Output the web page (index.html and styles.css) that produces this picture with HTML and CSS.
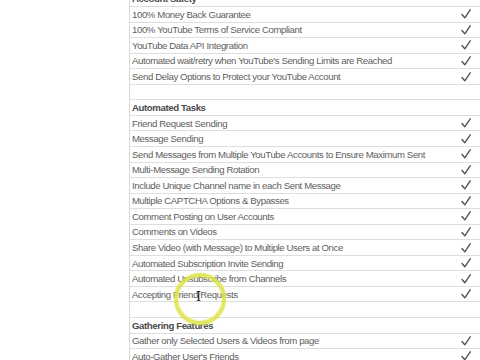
FILE: index.html
```html
<!DOCTYPE html>
<html>
<head>
<meta charset="utf-8">
<link rel="stylesheet" href="styles.css">
</head>
<body>
<div class="page">
  <div class="table">
    <div class="row head"><span class="label">Account Safety</span></div>
    <div class="row"><span class="label">100% Money Back Guarantee</span><span class="check"><svg viewBox="0 0 10 10"><path d="M1 5.5 L3.8 8.8 L9.2 0.8"/></svg></span></div>
    <div class="row"><span class="label">100% YouTube Terms of Service Compliant</span><span class="check"><svg viewBox="0 0 10 10"><path d="M1 5.5 L3.8 8.8 L9.2 0.8"/></svg></span></div>
    <div class="row"><span class="label">YouTube Data API Integration</span><span class="check"><svg viewBox="0 0 10 10"><path d="M1 5.5 L3.8 8.8 L9.2 0.8"/></svg></span></div>
    <div class="row"><span class="label">Automated wait/retry when YouTube's Sending Limits are Reached</span><span class="check"><svg viewBox="0 0 10 10"><path d="M1 5.5 L3.8 8.8 L9.2 0.8"/></svg></span></div>
    <div class="row"><span class="label">Send Delay Options to Protect your YouTube Account</span><span class="check"><svg viewBox="0 0 10 10"><path d="M1 5.5 L3.8 8.8 L9.2 0.8"/></svg></span></div>
    <div class="row"><span class="label"></span></div>
    <div class="row head"><span class="label">Automated Tasks</span></div>
    <div class="row"><span class="label">Friend Request Sending</span><span class="check"><svg viewBox="0 0 10 10"><path d="M1 5.5 L3.8 8.8 L9.2 0.8"/></svg></span></div>
    <div class="row"><span class="label">Message Sending</span><span class="check"><svg viewBox="0 0 10 10"><path d="M1 5.5 L3.8 8.8 L9.2 0.8"/></svg></span></div>
    <div class="row"><span class="label">Send Messages from Multiple YouTube Accounts to Ensure Maximum Sent</span><span class="check"><svg viewBox="0 0 10 10"><path d="M1 5.5 L3.8 8.8 L9.2 0.8"/></svg></span></div>
    <div class="row"><span class="label">Multi-Message Sending Rotation</span><span class="check"><svg viewBox="0 0 10 10"><path d="M1 5.5 L3.8 8.8 L9.2 0.8"/></svg></span></div>
    <div class="row"><span class="label">Include Unique Channel name in each Sent Message</span><span class="check"><svg viewBox="0 0 10 10"><path d="M1 5.5 L3.8 8.8 L9.2 0.8"/></svg></span></div>
    <div class="row"><span class="label">Multiple CAPTCHA Options &amp; Bypasses</span><span class="check"><svg viewBox="0 0 10 10"><path d="M1 5.5 L3.8 8.8 L9.2 0.8"/></svg></span></div>
    <div class="row"><span class="label">Comment Posting on User Accounts</span><span class="check"><svg viewBox="0 0 10 10"><path d="M1 5.5 L3.8 8.8 L9.2 0.8"/></svg></span></div>
    <div class="row"><span class="label">Comments on Videos</span><span class="check"><svg viewBox="0 0 10 10"><path d="M1 5.5 L3.8 8.8 L9.2 0.8"/></svg></span></div>
    <div class="row"><span class="label">Share Video (with Message) to Multiple Users at Once</span><span class="check"><svg viewBox="0 0 10 10"><path d="M1 5.5 L3.8 8.8 L9.2 0.8"/></svg></span></div>
    <div class="row"><span class="label">Automated Subscription Invite Sending</span><span class="check"><svg viewBox="0 0 10 10"><path d="M1 5.5 L3.8 8.8 L9.2 0.8"/></svg></span></div>
    <div class="row"><span class="label">Automated Unsubscribe from Channels</span><span class="check"><svg viewBox="0 0 10 10"><path d="M1 5.5 L3.8 8.8 L9.2 0.8"/></svg></span></div>
    <div class="row"><span class="label">Accepting Friend Requests</span><span class="check"><svg viewBox="0 0 10 10"><path d="M1 5.5 L3.8 8.8 L9.2 0.8"/></svg></span></div>
    <div class="row"><span class="label"></span></div>
    <div class="row head"><span class="label">Gathering Features</span></div>
    <div class="row"><span class="label">Gather only Selected Users &amp; Videos from page</span><span class="check"><svg viewBox="0 0 10 10"><path d="M1 5.5 L3.8 8.8 L9.2 0.8"/></svg></span></div>
    <div class="row"><span class="label">Auto-Gather User's Friends</span><span class="check"><svg viewBox="0 0 10 10"><path d="M1 5.5 L3.8 8.8 L9.2 0.8"/></svg></span></div>
  </div>
  <div class="cursor-ring"></div>
  <div class="ibeam">I</div>
</div>
</body>
</html>
```
FILE: styles.css
```css
html, body {
  margin: 0;
  padding: 0;
  background: #ffffff;
  overflow: hidden;
}
.page {
  position: relative;
  width: 480px;
  height: 360px;
  overflow: hidden;
  padding-left: 129px;
  box-sizing: border-box;
}
.table {
  margin-top: -8.5px;
  border-left: 1px solid #d8d8d8;
  font-family: "Liberation Sans", Arial, sans-serif;
  font-size: 9.6px;
  letter-spacing: -0.38px;
  color: #5e5e5e;
}
.row {
  display: flex;
  align-items: center;
  height: 15.55px;
  box-sizing: border-box;
  border-bottom: 1px solid #dedede;
  padding-left: 2px;
}
.row.head .label {
  font-weight: bold;
  color: #4a4a4a;
}
.label {
  flex: 1;
  white-space: nowrap;
}
.check {
  width: 19px;
  display: flex;
  align-items: center;
}
.check svg {
  width: 10px;
  height: 10px;
}
.check path {
  fill: none;
  stroke: #4f5a4a;
  stroke-width: 1.4;
  stroke-linecap: round;
  stroke-linejoin: round;
}
.cursor-ring {
  position: absolute;
  left: 174px;
  top: 273px;
  width: 44px;
  height: 44px;
  border: 4px solid rgba(222, 228, 70, 0.85);
  border-radius: 50%;
  box-shadow: 0 0 2px rgba(222, 228, 70, 0.6), inset 0 0 2px rgba(222, 228, 70, 0.6);
}
.ibeam {
  position: absolute;
  left: 196px;
  top: 289px;
  font-family: "DejaVu Serif", serif;
  font-size: 13px;
  color: #222;
}
```
